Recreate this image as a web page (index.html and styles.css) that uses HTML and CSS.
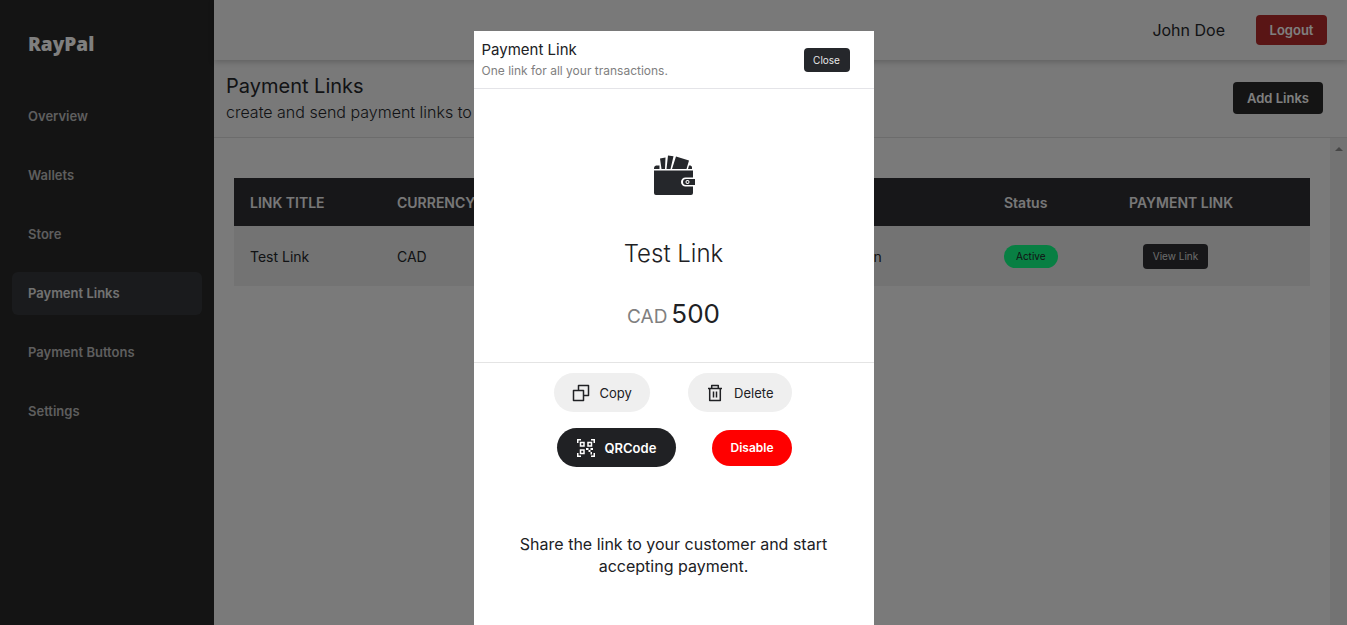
FILE: index.html
```html
<!DOCTYPE html>
<html lang="en">
<head>
<meta charset="utf-8">
<title>RayPal - Payment Links</title>
<meta name="viewport" content="width=device-width, initial-scale=1">
<link rel="stylesheet" href="styles.css">
</head>
<body>
<div class="app">
  <aside class="sidebar">
    <a class="logo" href="#">RayPal</a>
    <nav class="nav">
      <a class="nav-item" href="#">Overview</a>
      <a class="nav-item" href="#">Wallets</a>
      <a class="nav-item" href="#">Store</a>
      <a class="nav-item active" href="#" aria-current="page">Payment Links</a>
      <a class="nav-item" href="#">Payment Buttons</a>
      <a class="nav-item" href="#">Settings</a>
    </nav>
  </aside>
  <div class="main">
    <header class="topbar">
      <span class="user">John Doe</span>
      <button class="btn logout" type="button">Logout</button>
    </header>
    <div class="page-head">
      <div>
        <h1 class="page-title">Payment Links</h1>
        <p class="page-sub">create and send payment links to customers</p>
      </div>
      <button class="btn add" type="button">Add Links</button>
    </div>
    <div class="content">
      <div class="table-area">
        <table class="links">
          <colgroup><col class="c-title"><col class="c-mid"><col class="c-mid"><col><col class="c-status"><col class="c-link"></colgroup>
          <thead>
            <tr><th>LINK TITLE</th><th>CURRENCY</th><th>AMOUNT</th><th>DESCRIPTION</th><th>Status</th><th>PAYMENT LINK</th></tr>
          </thead>
          <tbody>
            <tr>
              <td>Test Link</td><td>CAD</td><td>500</td><td>Payments for a subscription</td>
              <td><span class="badge">Active</span></td>
              <td class="link-cell"><button class="view" type="button">View Link</button></td>
            </tr>
          </tbody>
        </table>
      </div>
      <div class="scrollbar" aria-hidden="true"><svg width="8" height="4" viewBox="0 0 8 4"><path d="M0 4 4 0 8 4z" fill="#8c8c8c"/></svg></div>
    </div>
  </div>
</div>

<div class="overlay">
  <section class="modal" role="dialog" aria-modal="true" aria-labelledby="dialog-title">
    <header class="modal-head">
      <div>
        <h2 class="modal-title" id="dialog-title">Payment Link</h2>
        <p class="modal-sub">One link for all your transactions.</p>
      </div>
      <button class="close" type="button">Close</button>
    </header>
    <div class="summary">
      <svg class="wallet" width="42" height="42" viewBox="0 0 42 42" aria-hidden="true">
        <g fill="#25272b">
          <path d="M7 4.500 12.500 3.500 12 15H8.500zM15 1.500l5.500.8L17.500 15H13.500zM23 2.500 36 6.500 33.500 15H19z"/>
          <path d="M1 15v-1q0-2 2-2.500h3.500V15zM35 15l1-3.500h1.500q1.500.5 1.500 2V15z"/>
          <path d="M1 16.500h39v7h-7.500a4.500 4.500 0 0 0 0 9H40V39q0 2-2 2H3q-2 0-2-2z"/>
          <path fill-rule="evenodd" d="M33 25h9v6h-9a3 3 0 0 1 0-6zm1.500 1a2 2 0 1 0 .01 0z"/>
          <circle cx="34.500" cy="28" r="1"/>
        </g>
      </svg>
      <h3 class="link-name">Test Link</h3>
      <p class="price"><span class="currency">CAD</span> <span class="amount">500</span></p>
    </div>
    <div class="actions">
      <div class="action-row">
        <button class="pill light" type="button">
          <svg width="18" height="18" viewBox="0 0 18 18" fill="none" stroke="#202124" stroke-width="1.500" stroke-linejoin="round" aria-hidden="true"><path d="M6.500 6.500V1.500h10v10h-5"/><path d="M1.500 6.500h10v10h-10z"/></svg>
          Copy
        </button>
        <button class="pill light" type="button">
          <svg width="18" height="18" viewBox="0 0 18 18" fill="none" stroke="#202124" stroke-width="1.500" stroke-linejoin="round" aria-hidden="true"><path d="M2 4.500h14M3.700 4.500v12h10.600v-12M5.700 4.500V1.500h6.600v3M7.500 7.500v6M10.500 7.500v6"/></svg>
          Delete
        </button>
      </div>
      <div class="action-row">
        <button class="pill dark" type="button">
          <svg width="18" height="18" viewBox="0 0 18 18" fill="none" stroke="#fff" stroke-width="1.500" aria-hidden="true"><path d="M.75 4V.75H4M14 .75h3.250V4M.75 14v3.250H4M14 17.250h3.250V14"/><path d="M3.500 3.500H7V7H3.500zM11 3.500h3.500V7H11zM3.500 11H7v3.500H3.500z"/><path stroke="none" fill="#fff" d="M9 9h2.500v2H9zM11.500 11h2v2h-2zM13.500 9H16v2h-2.500zM13.500 13H15v2.500h-1.500z"/></svg>
          QRCode
        </button>
        <button class="pill danger" type="button">Disable</button>
      </div>
    </div>
    <p class="note">Share the link to your customer and start accepting payment.</p>
  </section>
</div>
</body>
</html>
```

FILE: styles.css
```css
* { box-sizing: border-box; }
body, h1, h2, h3, p { margin: 0; font-weight: 400; }
body {
  font-family: Inter, "Liberation Sans", sans-serif;
  font-size: 14px;
  color: #25272b;
  background: #f2f2f2;
}
button { font: inherit; border: 0; cursor: pointer; }
a { text-decoration: none; }

.app { display: flex; height: 100vh; overflow: hidden; }
.sidebar { flex: 0 0 214px; padding: 32px 12px; background: #282828; }
.logo {
  display: block;
  padding-left: 16px;
  margin-bottom: 39px;
  font: 900 19px/24px "Noto Sans", sans-serif;
  color: #fff;
}
.nav { display: flex; flex-direction: column; gap: 16px; }
.nav-item {
  padding: 12px 16px;
  font-size: 13px;
  line-height: 19px;
  font-weight: 600;
  border-radius: 6px;
  color: #bcbcbc;
}
.nav-item.active { background: #35373a; color: #e4e4e4; }

.main { flex: 1; min-width: 0; display: flex; flex-direction: column; }
.topbar {
  display: flex;
  align-items: center;
  justify-content: flex-end;
  gap: 31px;
  height: 60px;
  padding: 0 20px;
  box-shadow: 0 2px 6px rgba(0, 0, 0, .2);
}
.user { font-size: 16px; }
.btn { border-radius: 4px; color: #fff; font-size: 13px; font-weight: 600; }
.logout { width: 71px; height: 30px; padding: 0; background: #b22a2a; }
.page-head {
  display: flex;
  align-items: center;
  justify-content: space-between;
  height: 78px;
  padding: 0 24px 2px 12px;
  border-bottom: 1px solid #d8d8d8;
}
.page-title { font-size: 20px; line-height: 28px; }
.page-sub { font-size: 16px; line-height: 24px; font-weight: 300; }
.add { width: 90px; height: 32px; padding: 0; background: #282828; }

.content { flex: 1; display: flex; background: #f5f5f5; }
.table-area { flex: 1; padding: 40px 20px; }
.scrollbar { width: 17px; padding-top: 4px; text-align: center; line-height: 8px; background: #e6e6e6; }
.links { width: 100%; table-layout: fixed; border-collapse: collapse; text-align: left; }
.c-title { width: 147px; }
.c-mid { width: 150px; }
.c-status { width: 125px; }
.c-link { width: 197px; }
.links th { height: 48px; padding: 0 16px; font-weight: 600; color: #f0f0f0; background: #2e2f33; white-space: nowrap; }
.links td { height: 60px; padding: 0 16px; background: #e6e6e6; white-space: nowrap; }
.badge { display: inline-block; padding: 0 12px; line-height: 23px; font-size: 10px; border-radius: 12px; background: #10ff86; }
.links .link-cell { padding-left: 30px; }
.view { width: 65px; height: 25px; padding: 0; border-radius: 4px; font-size: 10px; color: #d8d8d8; background: #2e2f33; }

.overlay {
  position: fixed;
  inset: 0;
  display: flex;
  justify-content: center;
  padding-top: 31px;
  background: rgba(0, 0, 0, .5);
}
.modal { width: 400px; background: #fff; color: #202124; }
.modal-head {
  display: flex;
  align-items: center;
  justify-content: space-between;
  height: 58px;
  padding: 0 24px 0 8px;
  border-bottom: 1px solid #e4e4e8;
}
.modal-title { font-size: 15px; line-height: 22px; }
.modal-sub { font-size: 12px; line-height: 20px; color: #808080; }
.close { width: 46px; height: 24px; padding: 0; border-radius: 4px; font-size: 10px; color: #e8e8e8; background: #25272b; }
.summary {
  display: flex;
  flex-direction: column;
  align-items: center;
  padding: 65px 0 26px;
  border-bottom: 1px solid #e4e4e4;
}
.link-name { margin-top: 40px; font-size: 24px; line-height: 36px; font-weight: 300; }
.price { margin-top: 24px; line-height: 36px; }
.currency { font-size: 19px; color: #808080; }
.amount { font-size: 26px; }
.actions { display: flex; flex-direction: column; gap: 16px; padding: 10px 82px 0 80px; }
.action-row { display: flex; align-items: center; justify-content: space-between; }
.action-row + .action-row { padding-left: 3px; }
.pill {
  display: flex;
  align-items: center;
  justify-content: center;
  gap: 10px;
  height: 39px;
  padding: 0 18px;
  border-radius: 20px;
  font-size: 13px;
  color: #202124;
}
.light { background: #efefef; }
.dark { padding: 0 20px; font-weight: 600; color: #fff; background: #202124; }
.danger { height: 36px; font-size: 12px; font-weight: 600; color: #fff; background: #f00; }
.note { padding: 66px 40px 0; font-size: 16px; line-height: 22px; text-align: center; }
```
